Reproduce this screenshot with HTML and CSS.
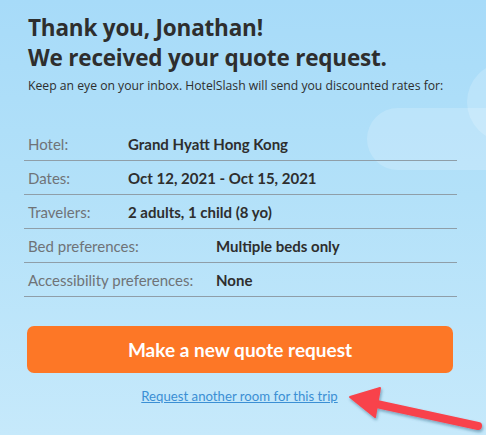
FILE: index.html
```html
<!DOCTYPE html>
<html>
<head>
<meta charset="utf-8">
<link rel="stylesheet" href="styles.css">
</head>
<body>
<div class="page">
  <div class="cloud cloud-round"></div>
  <div class="cloud cloud-long"></div>
  <div class="content">
    <h1 class="title">Thank you, Jonathan!<br>We received your quote request.</h1>
    <p class="subtitle">Keep an eye on your inbox. HotelSlash will send you discounted rates for:</p>
    <div class="details details-a">
      <div class="row"><span class="label">Hotel:</span><span class="value">Grand Hyatt Hong Kong</span></div>
      <div class="row"><span class="label">Dates:</span><span class="value">Oct 12, 2021 - Oct 15, 2021</span></div>
      <div class="row"><span class="label">Travelers:</span><span class="value">2 adults, 1 child (8 yo)</span></div>
    </div>
    <div class="details details-b">
      <div class="row"><span class="label">Bed preferences:</span><span class="value">Multiple beds only</span></div>
      <div class="row"><span class="label">Accessibility preferences:</span><span class="value">None</span></div>
    </div>
    <button class="cta">Make a new quote request</button>
    <div class="link-row"><a class="link" href="#">Request another room for this trip</a></div>
  </div>
  <svg class="arrow" width="150" height="50" viewBox="340 385 150 50">
    <defs>
      <filter id="sh" x="-20%" y="-40%" width="140%" height="180%">
        <feDropShadow dx="1" dy="2" stdDeviation="1.5" flood-color="#1a4a6a" flood-opacity="0.45"/>
      </filter>
    </defs>
    <g filter="url(#sh)" fill="#f8434b" stroke="#f8434b">
      <line x1="372" y1="403" x2="478" y2="426" stroke-width="8" stroke-linecap="round"/>
      <polygon points="350,397 380,388 375,417" stroke-width="2" stroke-linejoin="round"/>
    </g>
  </svg>
</div>
</body>
</html>
```
FILE: styles.css
```css
html, body {
  margin: 0;
  padding: 0;
}
body {
  width: 486px;
  height: 435px;
  overflow: hidden;
}
.page {
  position: relative;
  width: 486px;
  height: 435px;
  background: linear-gradient(180deg, #a7dbf9 0%, #b3e1f9 45%, #c6e9fb 100%);
  overflow: hidden;
}
.cloud {
  position: absolute;
  background: rgba(255, 255, 255, 0.18);
}
.cloud-round {
  left: 467px;
  top: 62px;
  width: 80px;
  height: 80px;
  border-radius: 50%;
}
.cloud-long {
  left: 367px;
  top: 108px;
  width: 160px;
  height: 62px;
  border-radius: 31px;
}
.content {
  position: relative;
  padding: 13px 29px 0 28px;
}
.title {
  margin: 0;
  font-family: "Open Sans", sans-serif;
  font-weight: 700;
  font-size: 22.5px;
  line-height: 30px;
  color: #2e2e2e;
  letter-spacing: -0.2px;
}
.subtitle {
  margin: 5px 0 0;
  font-family: "Open Sans", sans-serif;
  font-size: 12.2px;
  line-height: 16px;
  color: #2e2e2e;
}
.details {
  width: 433px;
  margin-left: -4px;
  font-family: Lato, sans-serif;
  font-size: 15px;
}
.details-a {
  margin-top: 33px;
}
.row {
  display: grid;
  align-items: center;
  height: 33px;
  border-bottom: 1px solid #8f9ea8;
  padding-left: 4px;
}
.details-a .row {
  grid-template-columns: 100px 1fr;
}
.details-b .row {
  grid-template-columns: 188px 1fr;
}
.label {
  color: #6f7377;
}
.value {
  color: #2e2e2e;
  font-weight: 700;
}
.cta {
  display: block;
  width: 426px;
  height: 47px;
  margin: 29px 0 0 -1px;
  border: 0;
  border-radius: 7px;
  background: #fd7726;
  color: #ffffff;
  font-family: Lato, sans-serif;
  font-weight: 700;
  font-size: 19px;
}
.link-row {
  margin-top: 14px;
  text-align: center;
  padding-right: 6px;
}
.link {
  font-family: Lato, sans-serif;
  font-size: 13.2px;
  color: #3b8fd4;
  text-decoration: underline;
}
.arrow {
  position: absolute;
  left: 340px;
  top: 385px;
}
```
